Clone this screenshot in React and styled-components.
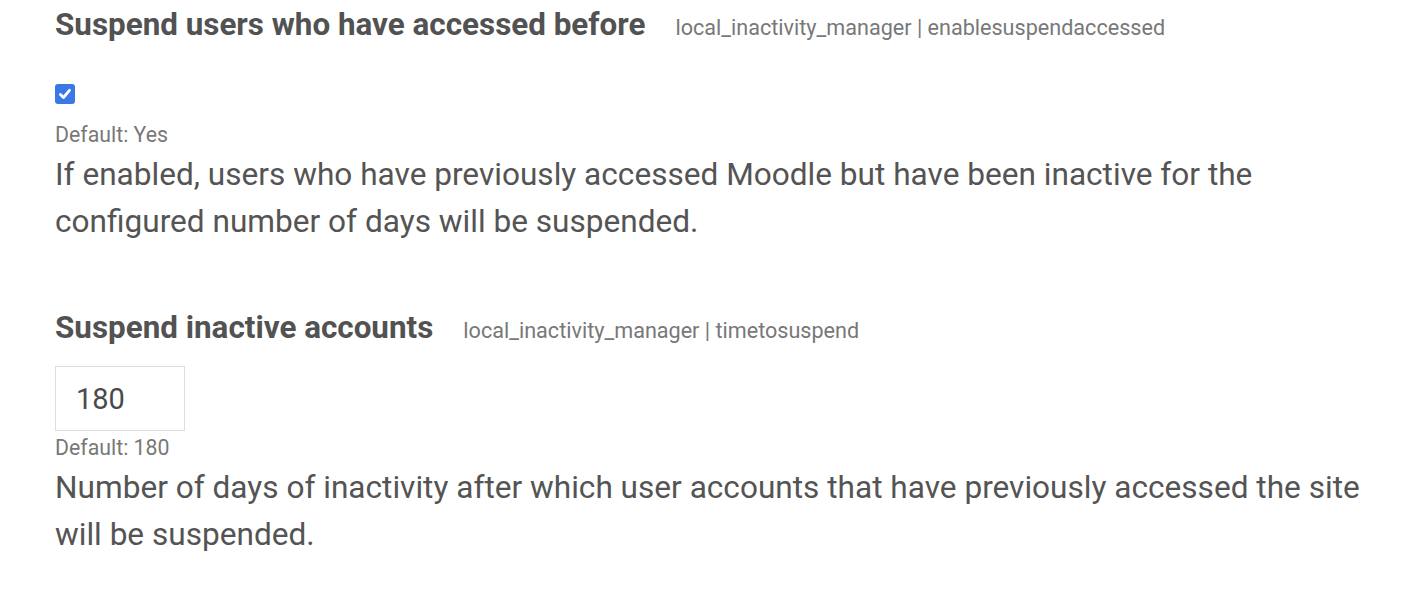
import React from 'react'
import styled, { createGlobalStyle } from 'styled-components'

const GlobalStyle = createGlobalStyle`
  html, body {
    margin: 0;
    padding: 0;
    background: #ffffff;
  }
  body {
    font-family: Roboto, "Liberation Sans", Arial, sans-serif;
    color: #545454;
  }
`

function Setting(props) {
  return (
    <Item first={props.first}>
      <TitleRow>
        <Title>{props.title}</Title>
        <Meta>{props.meta}</Meta>
      </TitleRow>
      <Control>{props.children}</Control>
      <Default>{props.defaultText}</Default>
      <Description>{props.description}</Description>
    </Item>
  )
}

function Checkbox() {
  return (
    <Check>
      <svg width="14" height="14" viewBox="0 0 14 14">
        <path d="M2.4 7.4 L5.5 10.5 L11.5 3.3" fill="none" stroke="#fff" strokeWidth="2.8" strokeLinecap="round" strokeLinejoin="round" />
      </svg>
    </Check>
  )
}

export default function App() {
  return (
    <Page>
      <GlobalStyle />
      <Setting
        first
        title="Suspend users who have accessed before"
        meta="local_inactivity_manager | enablesuspendaccessed"
        defaultText="Default: Yes"
        description="If enabled, users who have previously accessed Moodle but have been inactive for the configured number of days will be suspended."
      >
        <CheckWrap>
          <Checkbox />
        </CheckWrap>
      </Setting>
      <Setting
        title="Suspend inactive accounts"
        meta="local_inactivity_manager | timetosuspend"
        defaultText="Default: 180"
        description="Number of days of inactivity after which user accounts that have previously accessed the site will be suspended."
      >
        <NumberInput defaultValue="180" />
      </Setting>
    </Page>
  )
}

const Page = styled.div`
  padding: 0 38px 0 55px;
  width: 1428px;
  box-sizing: border-box;
`

const Item = styled.div`
  display: flex;
  flex-direction: column;
  padding-top: ${props => (props.first ? '4px' : '62px')};
`

const TitleRow = styled.div`
  display: flex;
  align-items: baseline;
  gap: 30px;
`

const Title = styled.h3`
  margin: 0;
  font-size: 31.4px;
  font-weight: 700;
  line-height: 42px;
  color: #525252;
`

const Meta = styled.span`
  font-size: 21.6px;
  color: #787878;
`

const Control = styled.div`
  display: flex;
  margin-top: 17px;
`

const CheckWrap = styled.div`
  padding: 21px 0 14px 0;
`

const Check = styled.span`
  display: flex;
  align-items: center;
  justify-content: center;
  width: 20px;
  height: 20px;
  border-radius: 3px;
  background: #3a78e6;
`

const NumberInput = styled.input`
  width: 130px;
  height: 65px;
  box-sizing: border-box;
  border: 1px solid #dedde2;
  padding: 0 20px;
  font-family: Roboto, "Liberation Sans", Arial, sans-serif;
  font-size: 29px;
  color: #4a4a4a;
  outline: none;
`

const Default = styled.div`
  margin-top: 2px;
  font-size: 21.3px;
  line-height: 30px;
  color: #787878;
`

const Description = styled.p`
  margin: 1px 0 0 0;
  font-size: 31.6px;
  line-height: 47px;
  color: #545454;
`
